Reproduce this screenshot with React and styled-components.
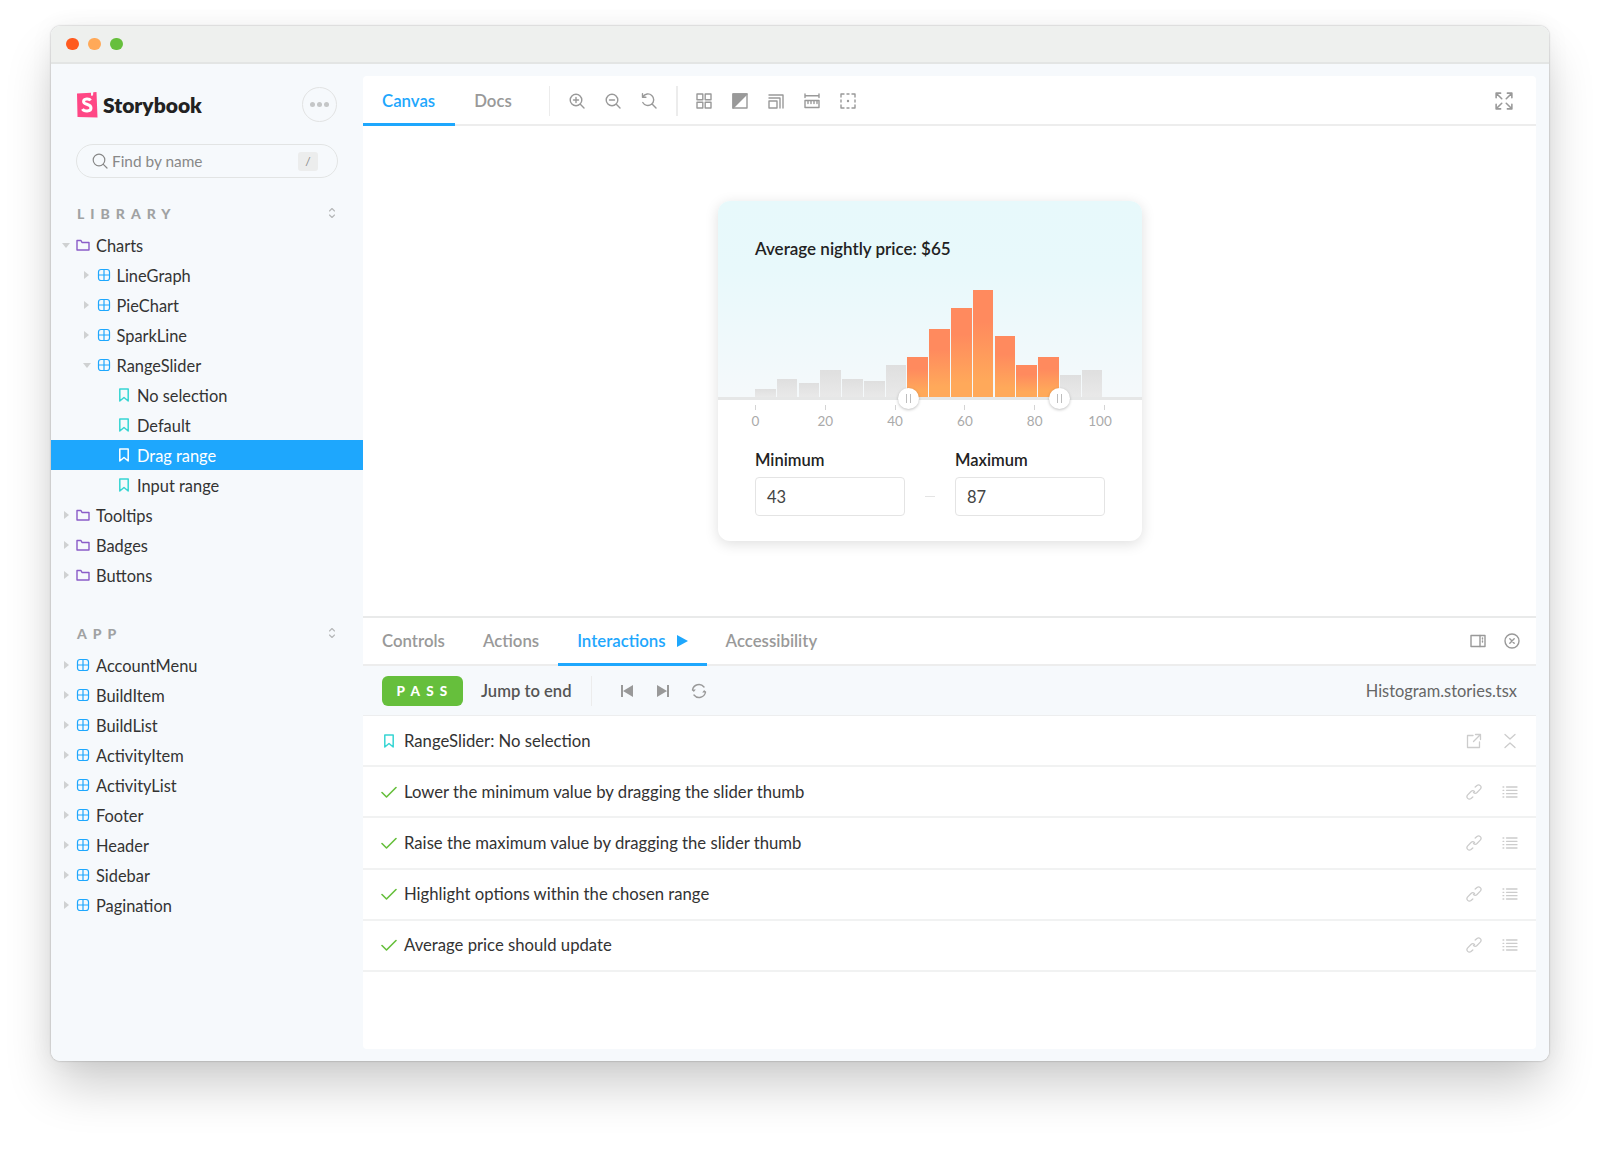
import React from "react";
import styled, { createGlobalStyle } from "styled-components";

const GlobalStyle = createGlobalStyle`
  html, body {
    margin: 0;
    padding: 0;
    background: #fff;
  }
  * { box-sizing: border-box; }
`;

const Page = styled.div`
  width: 1600px;
  height: 1149px;
  padding: 26px 0 0 51px;
  overflow: hidden;
  background: #fff;
  font-family: Lato, "Liberation Sans", sans-serif;
  color: #333;
`;

const Window = styled.div`
  width: 1498px;
  height: 1035px;
  display: flex;
  flex-direction: column;
  border-radius: 9px;
  overflow: hidden;
  background: #f6f9fc;
`;

const Shadow = styled.div`
  width: 1498px;
  height: 1035px;
  border-radius: 9px;
  box-shadow: 0 28px 50px -4px rgba(0, 0, 0, 0.2), 0 0 2px rgba(0, 0, 0, 0.35), 0 0 24px rgba(0, 0, 0, 0.05);
`;

const TitleBar = styled.div`
  height: 38px;
  flex: none;
  display: flex;
  align-items: center;
  gap: 9.6px;
  padding-left: 15px;
  background: #eef0ee;
  border-bottom: 2px solid #e3e5e4;
`;

const Dot = styled.span`
  width: 12.6px;
  height: 12.6px;
  border-radius: 50%;
  background: ${(p) => p.$color};
`;

const Body = styled.div`
  flex: 1;
  display: flex;
  min-height: 0;
`;

const Sidebar = styled.aside`
  width: 312px;
  flex: none;
  padding-top: 23px;
`;

const Brand = styled.div`
  height: 35px;
  display: flex;
  align-items: center;
  gap: 5px;
  padding: 0 26px 0 25px;
`;

const BrandName = styled.span`
  flex: 1;
  font-size: 21px;
  font-weight: 800;
  color: #222;
`;

const MoreButton = styled.div`
  width: 35px;
  height: 35px;
  border-radius: 50%;
  border: 1.5px solid #e2e3e3;
  display: flex;
  align-items: center;
  justify-content: center;
  gap: 2px;
`;

const MoreDot = styled.i`
  width: 5px;
  height: 5px;
  border-radius: 50%;
  background: #c4c6c7;
`;

const Search = styled.div`
  height: 34px;
  margin: 22px 25px 0;
  padding: 0 19px 0 15px;
  border: 1.5px solid #e2e4e4;
  border-radius: 17px;
  display: flex;
  align-items: center;
  gap: 4px;
  font-size: 15.4px;
  color: #888;
`;

const SearchLabel = styled.span`
  flex: 1;
`;

const Kbd = styled.span`
  width: 20px;
  height: 19px;
  border-radius: 3px;
  background: #eceded;
  color: #888;
  font-size: 12px;
  display: flex;
  align-items: center;
  justify-content: center;
`;

const SectionHead = styled.div`
  height: 32px;
  margin-top: ${(p) => p.$top}px;
  padding: 0 25px 2px 26px;
  display: flex;
  align-items: center;
  justify-content: space-between;
  font-size: 14px;
  font-weight: 900;
  letter-spacing: 6px;
  color: #a0a2a3;
`;

const Row = styled.div`
  height: 30px;
  display: flex;
  align-items: center;
  padding-left: ${(p) => 10 + p.$level * 20.5}px;
  font-size: 16.4px;
  color: ${(p) => (p.$active ? "#fff" : "#333")};
  background: ${(p) => (p.$active ? "#1ea7fd" : "transparent")};
`;

const ArrowBox = styled.span`
  width: 10px;
  display: flex;
  justify-content: center;
  margin-right: 5px;
`;

const ArrowRight = styled.i`
  border-left: 5px solid #cfd1d2;
  border-top: 4px solid transparent;
  border-bottom: 4px solid transparent;
`;

const ArrowDown = styled.i`
  border-top: 5px solid #cfd1d2;
  border-left: 4px solid transparent;
  border-right: 4px solid transparent;
`;

const RowLabel = styled.span`
  margin-left: 6px;
`;

const Main = styled.main`
  width: 1173px;
  margin: 12px 0;
  display: flex;
  flex-direction: column;
  background: #fff;
  border-radius: 4px;
  overflow: hidden;
`;

const Toolbar = styled.div`
  height: 50px;
  flex: none;
  display: flex;
  align-items: stretch;
  border-bottom: 2px solid #ededed;
  padding: 2px 14px 0 0;
`;

const Tab = styled.div`
  display: flex;
  align-items: center;
  gap: 11px;
  padding: 0 19px;
  margin-bottom: -2px;
  font-size: 16.8px;
  font-weight: 600;
  color: ${(p) => (p.$active ? "#1ea7fd" : "#999")};
  border-bottom: 3px solid ${(p) => (p.$active ? "#1ea7fd" : "transparent")};
`;

const CanvasTab = styled(Tab)`
  padding-right: 20px;
`;

const VLine = styled.span`
  width: 1.5px;
  height: 30px;
  align-self: center;
  background: #ececec;
  margin: ${(p) => p.$margin};
`;

const ToolButton = styled.span`
  width: 36px;
  flex: none;
  display: flex;
  align-items: center;
  justify-content: center;
`;

const Spacer = styled.span`
  flex: 1;
`;

const Canvas = styled.div`
  flex: 1;
  padding: 75px 0 0 355px;
`;

const Card = styled.div`
  width: 424px;
  height: 340px;
  border-radius: 12px;
  background: #fff;
  box-shadow: 0 3px 14px rgba(0, 0, 0, 0.13);
  overflow: hidden;
`;

const CardTop = styled.div`
  height: 196px;
  padding: 36px 0 0 37px;
  display: flex;
  flex-direction: column;
  justify-content: space-between;
  background: linear-gradient(#e7f9fb 0%, #e8f9fb 35%, #f5f9fb 100%);
`;

const CardTitle = styled.div`
  font-size: 17px;
  line-height: 24px;
  font-weight: 600;
  color: #222;
`;

const Bars = styled.div`
  display: flex;
  align-items: flex-end;
  gap: 1.2px;
`;

const Bar = styled.div`
  width: 20.6px;
  background: ${(p) =>
    p.$on
      ? "linear-gradient(#ff8a5e 30%, #ffa95a 85%)"
      : "linear-gradient(#dfdfdf, #e9e9e9)"};
`;

const Axis = styled.div`
  position: relative;
  height: 3px;
  background: #e6e7e7;
`;

const Thumb = styled.span`
  position: absolute;
  top: -9px;
  left: ${(p) => p.$left}px;
  width: 21px;
  height: 21px;
  border-radius: 50%;
  background: #fff;
  box-shadow: 0 1px 3px rgba(0, 0, 0, 0.25);
  display: flex;
  align-items: center;
  justify-content: center;
  gap: 3px;
`;

const Grip = styled.i`
  width: 1.2px;
  height: 9px;
  background: #bdbdbd;
`;

const Ticks = styled.div`
  margin-top: 5px;
  padding: 0 37px;
  display: flex;
  justify-content: space-between;
`;

const Tick = styled.div`
  width: 1px;
  display: flex;
  flex-direction: column;
  align-items: center;
  &::before {
    content: "";
    width: 1px;
    height: 5px;
    background: #d4d4d4;
  }
`;

const TickLabel = styled.span`
  margin-top: 2px;
  margin-right: ${(p) => p.$shift || 0}px;
  font-size: 13.5px;
  line-height: 18px;
  color: #aaa;
  white-space: nowrap;
`;

const Fields = styled.div`
  margin-top: 20px;
  padding: 0 37px 0 37px;
  display: flex;
  align-items: flex-end;
  justify-content: space-between;
`;

const Field = styled.div`
  width: 150px;
`;

const FieldLabel = styled.div`
  font-size: 16.5px;
  line-height: 20px;
  font-weight: 600;
  color: #222;
  margin-bottom: 7px;
`;

const FieldValue = styled.div`
  height: 39px;
  border: 1.5px solid #e4e4e4;
  border-radius: 4px;
  padding-left: 11px;
  display: flex;
  align-items: center;
  font-size: 16.5px;
  color: #444;
`;

const Dash = styled.span`
  width: 10px;
  height: 1.5px;
  background: #e4e4e4;
  margin-bottom: 19px;
`;

const Panel = styled.section`
  height: 433px;
  flex: none;
  display: flex;
  flex-direction: column;
  border-top: 2px solid #e9eaea;
`;

const PanelTabs = styled(Toolbar)`
  height: 48px;
  padding: 0 7px 0 0;
`;

const PanelAction = styled.span`
  width: 34px;
  display: flex;
  align-items: center;
  justify-content: center;
`;

const RunBar = styled.div`
  height: 50px;
  flex: none;
  display: flex;
  align-items: center;
  padding: 0 19px;
  background: #f6f9fc;
  border-bottom: 1px solid #edeeef;
`;

const PassBadge = styled.span`
  width: 81px;
  height: 30px;
  border-radius: 6px;
  background: #66bf3c;
  color: #fff;
  display: flex;
  align-items: center;
  justify-content: center;
  font-size: 13.5px;
  font-weight: 900;
  letter-spacing: 6.2px;
  padding-left: 5px;
`;

const JumpLabel = styled.span`
  margin-left: 18px;
  font-size: 16.6px;
  font-weight: 600;
  color: #555;
`;

const FileName = styled.span`
  font-size: 16.4px;
  color: #666;
`;

const StepRow = styled.div`
  height: 51.2px;
  flex: none;
  display: flex;
  align-items: center;
  padding: 0 8px 0 18px;
  border-bottom: 2px solid #f1f2f2;
  font-size: 16.7px;
  color: #333;
`;

const StepIcon = styled.span`
  width: 16px;
  display: flex;
  justify-content: center;
  margin-right: 7px;
`;

const StepText = styled.span`
  flex: 1;
`;

const StepAction = styled.span`
  width: 36px;
  display: flex;
  justify-content: center;
`;

const Icon = ({ size = 16, box = 16, color = "#999", width = 1.4, children }) => (
  <svg
    width={size}
    height={size}
    viewBox={`0 0 ${box} ${box}`}
    fill="none"
    stroke={color}
    strokeWidth={width}
    strokeLinecap="round"
    strokeLinejoin="round"
  >
    {children}
  </svg>
);

const Logo = () => (
  <svg width="22" height="26" viewBox="0 0 22 26">
    <path d="M1 1.5 15 .8v3l2-.2.3-3.4L20.500 0 21.500 25.500 1.500 25z" fill="#ff4785" />
    <path
      d="M14.500 8.500C13.500 6.500 7.500 6.300 7.600 9.700 7.700 13 15 11.500 15 16c0 3.800-7 3.800-8.500 1"
      fill="none"
      stroke="#fff"
      strokeWidth="3"
    />
  </svg>
);

const SearchIcon = () => (
  <Icon size={16} color="#888" width={1.2}>
    <circle cx="7" cy="7" r="5.800" />
    <path d="M11.300 11.300 15 15" />
  </Icon>
);

const UpDown = () => (
  <Icon size={12} box={12} color="#b5b7b8" width={1.1}>
    <path d="M3.500 4 6 1.500 8.500 4M3.500 8 6 10.500 8.500 8" />
  </Icon>
);

const FolderIcon = () => (
  <Icon size={14} box={14} color="#8a5cc8" width={1.4}>
    <path d="M1 2.500h4l1 2h7v7.500H1z" />
  </Icon>
);

const ComponentIcon = () => (
  <Icon size={14} box={14} color="#1ea7fd" width={1.2}>
    <rect x="1.500" y="1.500" width="11" height="11" rx="2.500" />
    <path d="M7 1.500v11M1.500 7h11" />
  </Icon>
);

const BookmarkIcon = ({ color = "#37d5d3" }) => (
  <Icon size={14} box={14} color={color} width={1.5}>
    <path d="M2.800 1h8.400v12L7 9.500 2.800 13z" />
  </Icon>
);

const ZoomIn = () => (
  <Icon>
    <circle cx="7" cy="7" r="5.800" />
    <path d="M11.300 11.300 15 15M4.500 7h5M7 4.500v5" />
  </Icon>
);

const ZoomOut = () => (
  <Icon>
    <circle cx="7" cy="7" r="5.800" />
    <path d="M11.300 11.300 15 15M4.500 7h5" />
  </Icon>
);

const ZoomReset = () => (
  <Icon>
    <path d="M2 3.600A5.800 5.800 0 1 1 1.800 9.500M11.300 11.300 15 15M1.500 .8v3.400h3.400" />
  </Icon>
);

const GridIcon = () => (
  <Icon>
    <rect x="1" y="1" width="5.800" height="5.800" />
    <rect x="9.200" y="1" width="5.800" height="5.800" />
    <rect x="1" y="9.200" width="5.800" height="5.800" />
    <rect x="9.200" y="9.200" width="5.800" height="5.800" />
  </Icon>
);

const ContrastIcon = () => (
  <Icon>
    <rect x="1" y="1" width="14" height="14" />
    <path d="M1 1h14L1 15z" fill="#999" />
  </Icon>
);

const OutlineIcon = () => (
  <Icon>
    <path d="M1 2h14v13M1 5h11v10M1 8h8v7H1z" />
  </Icon>
);

const RulerIcon = () => (
  <Icon>
    <path d="M1 1v3.500M15 1v3.500M1 2.800h14M1 7.500h14v7H1zM4 7.500v3M7 7.500v3M10 7.500v3M13 7.500v3" />
  </Icon>
);

const MeasureIcon = () => (
  <Icon>
    <path d="M1 4V1h3M7 1h2M12 1h3v3M15 7v2M15 12v3h-3M9 15H7M4 15H1v-3M1 9V7" />
    <circle cx="8" cy="8" r=".5" fill="#999" />
  </Icon>
);

const FullscreenIcon = () => (
  <Icon size={18}>
    <path d="M6 6 1.500 1.500M1 5V1h4M10 6l4.500-4.500M11 1h4v4M6 10l-4.500 4.500M1 11v4h4M10 10l4.500 4.500M11 15h4v-4" />
  </Icon>
);

const PanelLayoutIcon = () => (
  <Icon>
    <rect x="1" y="2.500" width="14" height="11" />
    <path d="M10 2.500v11M12.500 5v1M12.500 8v1" />
  </Icon>
);

const CloseIcon = () => (
  <Icon>
    <circle cx="8" cy="8" r="7" />
    <path d="m5.800 5.800 4.400 4.400M10.200 5.800l-4.400 4.400" />
  </Icon>
);

const PlayIcon = () => (
  <svg width="11" height="12" viewBox="0 0 11 12">
    <path d="M0 0 11 6 0 12z" fill="#1ea7fd" />
  </svg>
);

const SkipBack = () => (
  <svg width="14" height="14" viewBox="0 0 14 14" fill="#999">
    <path d="M1 1h2v12H1zM13 1v12L3 7z" />
  </svg>
);

const SkipForward = () => (
  <svg width="14" height="14" viewBox="0 0 14 14" fill="#999">
    <path d="M11 1h2v12h-2zM1 1v12l10-6z" />
  </svg>
);

const SyncIcon = () => (
  <Icon>
    <path d="M1.500 7A6.500 6.500 0 0 1 13 4M14.500 9A6.500 6.500 0 0 1 3 12" />
    <path d="M.8 6.500h4L2.800 9zM15.200 9.500h-4l2-2.500z" fill="#999" stroke="none" />
  </Icon>
);

const CheckIcon = () => (
  <Icon size={16} color="#66bf3c" width={1.6}>
    <path d="M1 8.500 5.500 13 15 3.500" />
  </Icon>
);

const OpenIcon = () => (
  <Icon color="#ccc" width={1.3}>
    <path d="M7 2.500H1.500v12h12V9M9.500 1.500h5v5M14.500 1.500 7.500 8.500" />
  </Icon>
);

const CollapseIcon = () => (
  <Icon color="#ccc" width={1.3}>
    <path d="M3 1.500 8 6l5-4.500M3 14.500 8 10l5 4.500" />
  </Icon>
);

const LinkIcon = () => (
  <Icon color="#ccc" width={1.3}>
    <path d="M9.200 3 11 1.400a2.500 2.500 0 0 1 3.500 3.500L11 8.500a2.500 2.500 0 0 1-3.500 0M6.800 13 5 14.600a2.500 2.500 0 0 1-3.500-3.500L5 7.500a2.500 2.500 0 0 1 3.500 0" />
  </Icon>
);

const ListIcon = () => (
  <Icon color="#ccc" width={1.3}>
    <path d="M4.500 3H15M4.500 6.300H15M4.500 9.700H15M4.500 13H15M1 3h.8M1 6.300h.8M1 9.700h.8M1 13h.8" />
  </Icon>
);

const libraryTree = [
  { label: "Charts", level: 0, kind: "folder", open: true },
  { label: "LineGraph", level: 1, kind: "component" },
  { label: "PieChart", level: 1, kind: "component" },
  { label: "SparkLine", level: 1, kind: "component" },
  { label: "RangeSlider", level: 1, kind: "component", open: true },
  { label: "No selection", level: 2, kind: "story" },
  { label: "Default", level: 2, kind: "story" },
  { label: "Drag range", level: 2, kind: "story", active: true },
  { label: "Input range", level: 2, kind: "story" },
  { label: "Tooltips", level: 0, kind: "folder" },
  { label: "Badges", level: 0, kind: "folder" },
  { label: "Buttons", level: 0, kind: "folder" },
];

const appTree = [
  "AccountMenu",
  "BuildItem",
  "BuildList",
  "ActivityItem",
  "ActivityList",
  "Footer",
  "Header",
  "Sidebar",
  "Pagination",
].map((label) => ({ label, level: 0, kind: "component" }));

const histogram = [8.3, 18.3, 14.3, 27.3, 18.3, 16.3, 32.3, 39.7, 68, 89, 107, 60.7, 32.3, 39.7, 21.7, 26.7];

const ticks = [0, 20, 40, 60, 80, 100];

const steps = [
  "Lower the minimum value by dragging the slider thumb",
  "Raise the maximum value by dragging the slider thumb",
  "Highlight options within the chosen range",
  "Average price should update",
];

const TreeRow = ({ item }) => (
  <Row $level={item.level} $active={item.active}>
    <ArrowBox>
      {item.kind !== "story" && (item.open ? <ArrowDown /> : <ArrowRight />)}
    </ArrowBox>
    {item.kind === "folder" && <FolderIcon />}
    {item.kind === "component" && <ComponentIcon />}
    {item.kind === "story" && <BookmarkIcon color={item.active ? "#fff" : "#37d5d3"} />}
    <RowLabel>{item.label}</RowLabel>
  </Row>
);

const App = () => {
  return (
    <Page>
      <GlobalStyle />
      <Shadow>
        <Window>
          <TitleBar>
            <Dot $color="#ff5a1f" />
            <Dot $color="#ffa958" />
            <Dot $color="#66bf3c" />
          </TitleBar>
          <Body>
            <Sidebar>
              <Brand>
                <Logo />
                <BrandName>Storybook</BrandName>
                <MoreButton>
                  <MoreDot />
                  <MoreDot />
                  <MoreDot />
                </MoreButton>
              </Brand>
              <Search>
                <SearchIcon />
                <SearchLabel>Find by name</SearchLabel>
                <Kbd>/</Kbd>
              </Search>
              <SectionHead $top={20}>
                LIBRARY
                <UpDown />
              </SectionHead>
              {libraryTree.map((item) => (
                <TreeRow key={item.label} item={item} />
              ))}
              <SectionHead $top={28}>
                APP
                <UpDown />
              </SectionHead>
              {appTree.map((item) => (
                <TreeRow key={item.label} item={item} />
              ))}
            </Sidebar>
            <Main>
              <Toolbar>
                <CanvasTab $active>Canvas</CanvasTab>
                <Tab>Docs</Tab>
                <VLine $margin="0 9px 0 18px" />
                <ToolButton><ZoomIn /></ToolButton>
                <ToolButton><ZoomOut /></ToolButton>
                <ToolButton><ZoomReset /></ToolButton>
                <VLine $margin="0 8px 0 9px" />
                <ToolButton><GridIcon /></ToolButton>
                <ToolButton><ContrastIcon /></ToolButton>
                <ToolButton><OutlineIcon /></ToolButton>
                <ToolButton><RulerIcon /></ToolButton>
                <ToolButton><MeasureIcon /></ToolButton>
                <Spacer />
                <ToolButton><FullscreenIcon /></ToolButton>
              </Toolbar>
              <Canvas>
                <Card>
                  <CardTop>
                    <CardTitle>Average nightly price: $65</CardTitle>
                    <Bars>
                      {histogram.map((height, i) => (
                        <Bar key={i} $on={i >= 7 && i <= 13} style={{ height }} />
                      ))}
                    </Bars>
                  </CardTop>
                  <Axis>
                    <Thumb $left={180}><Grip /><Grip /></Thumb>
                    <Thumb $left={331}><Grip /><Grip /></Thumb>
                  </Axis>
                  <Ticks>
                    {ticks.map((t) => (
                      <Tick key={t}>
                        <TickLabel $shift={t === 100 ? 9 : 0}>{t}</TickLabel>
                      </Tick>
                    ))}
                  </Ticks>
                  <Fields>
                    <Field>
                      <FieldLabel>Minimum</FieldLabel>
                      <FieldValue>43</FieldValue>
                    </Field>
                    <Dash />
                    <Field>
                      <FieldLabel>Maximum</FieldLabel>
                      <FieldValue>87</FieldValue>
                    </Field>
                  </Fields>
                </Card>
              </Canvas>
              <Panel>
                <PanelTabs>
                  <Tab>Controls</Tab>
                  <Tab>Actions</Tab>
                  <Tab $active>Interactions <PlayIcon /></Tab>
                  <Tab>Accessibility</Tab>
                  <Spacer />
                  <PanelAction><PanelLayoutIcon /></PanelAction>
                  <PanelAction><CloseIcon /></PanelAction>
                </PanelTabs>
                <RunBar>
                  <PassBadge>PASS</PassBadge>
                  <JumpLabel>Jump to end</JumpLabel>
                  <VLine $margin="0 17px 0 19px" />
                  <ToolButton><SkipBack /></ToolButton>
                  <ToolButton><SkipForward /></ToolButton>
                  <ToolButton><SyncIcon /></ToolButton>
                  <Spacer />
                  <FileName>Histogram.stories.tsx</FileName>
                </RunBar>
                <StepRow>
                  <StepIcon><BookmarkIcon /></StepIcon>
                  <StepText>RangeSlider: No selection</StepText>
                  <StepAction><OpenIcon /></StepAction>
                  <StepAction><CollapseIcon /></StepAction>
                </StepRow>
                {steps.map((step) => (
                  <StepRow key={step}>
                    <StepIcon><CheckIcon /></StepIcon>
                    <StepText>{step}</StepText>
                    <StepAction><LinkIcon /></StepAction>
                    <StepAction><ListIcon /></StepAction>
                  </StepRow>
                ))}
              </Panel>
            </Main>
          </Body>
        </Window>
      </Shadow>
    </Page>
  );
};

export default App;
